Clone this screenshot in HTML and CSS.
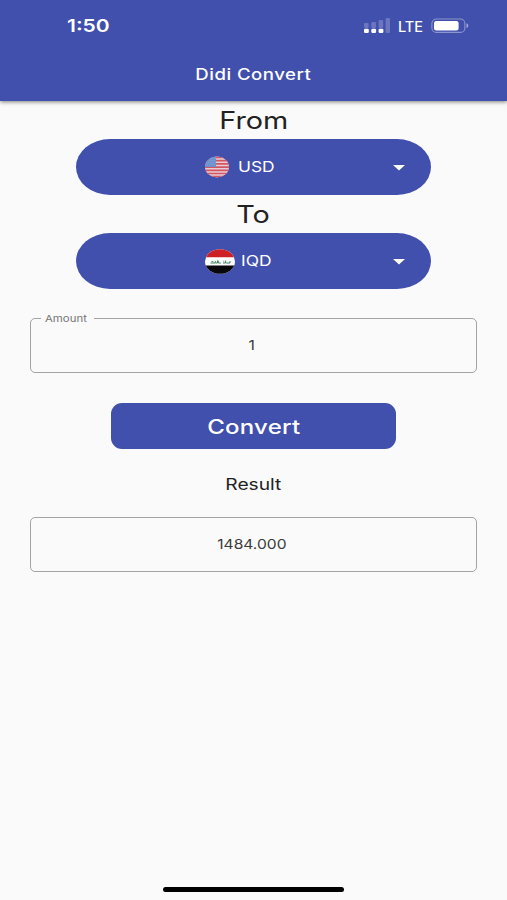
FILE: index.html
```html
<!DOCTYPE html>
<html lang="en">
<head>
<meta charset="utf-8">
<title>Didi Convert</title>
<link rel="stylesheet" href="styles.css">
</head>
<body>
<div class="app">
  <header class="appbar">
    <div class="status">
      <span class="wide time">1:50</span>
      <div class="indicators">
        <svg class="signal" width="26" height="16" viewBox="0 0 26 16">
          <g fill="#fff" opacity=".22">
            <rect x="0" y="5" width="4.6" height="5" rx="1"/><rect x="7.3" y="4" width="4.6" height="6" rx="1"/><rect x="14.6" y="2" width="4.6" height="8" rx="1"/><rect x="21.6" y="0" width="4.4" height="15" rx="1"/>
          </g>
          <g fill="#fff">
            <rect x="0" y="10.8" width="4.8" height="4.2" rx="1.2"/><rect x="7.3" y="10.8" width="4.8" height="4.2" rx="1.2"/><rect x="14.6" y="10.8" width="4.8" height="4.2" rx="1.2"/>
          </g>
        </svg>
        <span class="wide lte">LTE</span>
        <svg class="battery" width="38" height="16" viewBox="0 0 38 16">
          <rect x=".9" y="1" width="33" height="13.4" rx="4.5" fill="none" stroke="#fff" stroke-opacity=".4" stroke-width="1.1"/>
          <rect x="3" y="3" width="24.6" height="9.4" rx="2.2" fill="#fff"/>
          <path d="M35.5 5.3c2.4.8 2.4 4 0 4.8z" fill="#fff" opacity=".5"/>
        </svg>
      </div>
    </div>
    <h1 class="title"><span class="wide">Didi Convert</span></h1>
  </header>
  <main class="content">
    <h2 class="label"><span class="wide">From</span></h2>
    <div class="picker">
      <svg class="flag usa" width="24" height="22" viewBox="0 0 24 22">
        <defs><clipPath id="usa"><ellipse cx="12" cy="11" rx="12" ry="10.4"/></clipPath></defs>
        <g clip-path="url(#usa)">
          <path fill="#e8cdd6" d="M0 0h24v22H0z"/>
          <path stroke="#d2555f" stroke-width="1.7" d="M0 1.5h24M0 4.7h24M0 7.9h24M0 11.1h24M0 14.3h24M0 17.5h24M0 20.7h24"/>
          <path fill="#6b90cc" d="M0 0h11v11H0z"/>
          <path stroke="#96b2de" stroke-width=".7" stroke-dasharray="1 1.2" d="M1 2.5h10M2 4.5h9M1 6.5h10M2 8.5h9"/>
        </g>
      </svg>
      <span class="wide code">USD</span>
      <svg class="caret" width="12" height="6" viewBox="0 0 12 6"><path fill="#fff" d="M0 0h12L6 5.5z"/></svg>
    </div>
    <h2 class="label"><span class="wide">To</span></h2>
    <div class="picker">
      <svg class="flag iraq" width="30" height="25" viewBox="0 0 30 25">
        <defs><clipPath id="iraq"><ellipse cx="15" cy="12.5" rx="15" ry="12.3"/></clipPath></defs>
        <g clip-path="url(#iraq)">
          <path fill="#fff" d="M0 0h30v25H0z"/><path fill="#cd2027" d="M0 0h30v8.2H0z"/><path fill="#080808" d="M0 16.6h30V25H0z"/>
        </g>
        <path fill="none" stroke="#27734a" stroke-width=".9" d="M5.5 14h4.5l.4-2M10.4 14h2l.3-2.6M13.3 11.8v2.2h2.5M18 14h2.5l.3-2.5M21.2 14H25v-2M6.5 12.6h1.8M18.3 12.2h1"/>
      </svg>
      <span class="wide code">IQD</span>
      <svg class="caret" width="12" height="6" viewBox="0 0 12 6"><path fill="#fff" d="M0 0h12L6 5.5z"/></svg>
    </div>
    <fieldset class="field amount">
      <legend><span class="wide">Amount</span></legend>
      <div class="entry"><span class="wide value">1</span></div>
    </fieldset>
    <button class="convert" type="button"><span class="wide">Convert</span></button>
    <p class="result"><span class="wide">Result</span></p>
    <div class="field output"><span class="wide value">1484.000</span></div>
  </main>
  <div class="home"></div>
</div>
</body>
</html>
```
FILE: styles.css
```css
* { box-sizing: border-box; }
body { margin: 0; font-family: Inter, "Liberation Sans", sans-serif; background: #fafafa; color: #222; }
.app { height: 900px; display: flex; flex-direction: column; overflow: hidden; }
.wide { display: inline-block; transform: scaleX(1.2); white-space: nowrap; }
h1, h2, p { margin: 0; }

.appbar { height: 101px; flex: none; background: #414fad; color: #fff; box-shadow: 0 1px 4px rgba(0, 0, 0, .5); }
.status { height: 52px; display: flex; align-items: center; justify-content: space-between; padding: 0 38px 0 67px; }
.time { font-size: 17.5px; font-weight: 600; line-height: 20px; transform-origin: left; }
.indicators { display: flex; align-items: center; }
.lte { width: 25px; margin: 0 8px; font-size: 14px; font-weight: 500; transform: scaleX(1.04); transform-origin: left; }
.title { height: 44px; display: flex; align-items: center; justify-content: center; font-size: 15.5px; font-weight: 550; letter-spacing: .4px; }

.content { flex: 1; display: flex; flex-direction: column; align-items: center; }
.label { height: 38px; line-height: 40px; font-size: 24px; font-weight: 400; }
.picker { width: 355px; height: 56px; flex: none; padding: 0 26px 0 129px; display: flex; align-items: center; border-radius: 34px / 28px; background: #414fad; color: #fff; }
.code { font-size: 14.5px; line-height: 18px; transform-origin: left; }
.usa { margin-right: 9px; }
.iraq { margin-right: 6px; }
.caret { margin-left: auto; margin-top: 1px; }

.field { width: 447px; flex: none; margin: 0; padding: 0; border: 1px solid #a3a3a3; border-radius: 5px; color: #3c3c3c; }
.value { font-size: 13px; line-height: 16px; }
.amount { height: 60px; margin-top: 24px; }
.amount legend { height: 11px; width: 53px; margin-left: 10px; padding: 0 0 0 4px; font-size: 9.5px; line-height: 11px; color: #777; }
.amount legend .wide { transform-origin: left; }
.entry { height: 42px; display: flex; align-items: center; justify-content: center; padding-right: 3px; }
.convert { width: 285px; height: 46px; flex: none; margin-top: 30px; padding: 2px 0 0; border: 0; border-radius: 11px; background: #414fad; color: #fff; font: 550 20px/24px Inter, sans-serif; letter-spacing: .2px; }
.result { height: 68px; line-height: 70px; font-size: 16px; }
.output { height: 55px; display: flex; align-items: center; justify-content: center; padding: 0 3px 2px 0; }
.output .value { transform: scaleX(1.2); }
.home { flex: none; width: 181px; height: 5px; margin: 0 auto 8px; border-radius: 3px; background: #000; }
```
